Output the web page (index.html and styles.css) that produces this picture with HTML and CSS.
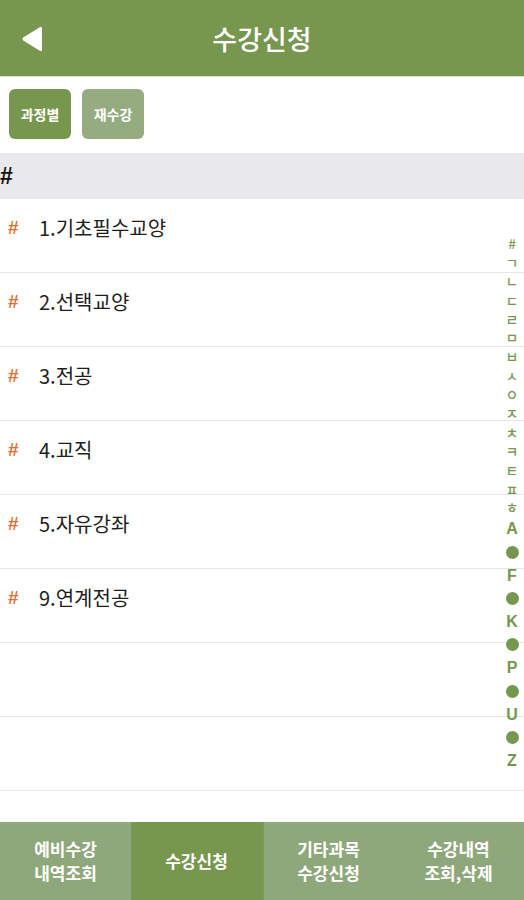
FILE: index.html
```html
<!DOCTYPE html>
<html lang="ko">
<head>
<meta charset="utf-8">
<title>수강신청</title>
<link rel="stylesheet" href="styles.css">
</head>
<body>
<div class="app">
  <header class="topbar">
    <div class="back">
      <svg width="22" height="26" viewBox="0 0 22 26"><path d="M21 2.5 L21 23.5 Q21 26 18.8 24.8 L2.2 14.6 Q0.5 13 2.2 11.4 L18.8 1.2 Q21 0 21 2.5 Z" fill="#fff"/></svg>
    </div>
    <h1 class="title">수강신청</h1>
    <div class="spacer"></div>
  </header>
  <div class="toolbar">
    <button class="chip chip-on">과정별</button>
    <button class="chip chip-off">재수강</button>
  </div>
  <div class="section">#</div>
  <ul class="list">
    <li class="row"><span class="hash">#</span><span class="label">1.기초필수교양</span></li>
    <li class="row"><span class="hash">#</span><span class="label">2.선택교양</span></li>
    <li class="row"><span class="hash">#</span><span class="label">3.전공</span></li>
    <li class="row"><span class="hash">#</span><span class="label">4.교직</span></li>
    <li class="row"><span class="hash">#</span><span class="label">5.자유강좌</span></li>
    <li class="row"><span class="hash">#</span><span class="label">9.연계전공</span></li>
    <li class="row"></li>
    <li class="row"></li>
  </ul>
  <div class="fill"></div>
  <nav class="tabs">
    <div class="tab">예비수강<br>내역조회</div>
    <div class="tab tab-on">수강신청</div>
    <div class="tab tab-mid">기타과목<br>수강신청</div>
    <div class="tab">수강내역<br>조회,삭제</div>
  </nav>
  <div class="index">
    <span class="ko">#</span><span class="ko">ㄱ</span><span class="ko">ㄴ</span><span class="ko">ㄷ</span><span class="ko">ㄹ</span><span class="ko">ㅁ</span><span class="ko">ㅂ</span><span class="ko">ㅅ</span><span class="ko">ㅇ</span><span class="ko">ㅈ</span><span class="ko">ㅊ</span><span class="ko">ㅋ</span><span class="ko">ㅌ</span><span class="ko">ㅍ</span><span class="ko">ㅎ</span>
    <span class="en">A</span><span class="dot"><i></i></span><span class="en">F</span><span class="dot"><i></i></span><span class="en">K</span><span class="dot"><i></i></span><span class="en">P</span><span class="dot"><i></i></span><span class="en">U</span><span class="dot"><i></i></span><span class="en">Z</span>
  </div>
</div>
</body>
</html>
```

FILE: styles.css
```css
* { box-sizing: border-box; }
html, body { margin: 0; padding: 0; background: #fff; }
body { font-family: "Noto Sans CJK KR", "Noto Sans", sans-serif; }
.app { position: relative; width: 524px; height: 900px; display: flex; flex-direction: column; overflow: hidden; }

.topbar { height: 77px; background: #77974f; display: grid; grid-template-columns: 70px 1fr 70px; align-items: center; border-bottom: 1px solid #d9e2cf; }
.back { padding-left: 21px; display: flex; align-items: center; padding-top: 1px; }
.title { margin: 0; text-align: center; color: #fff; font-size: 27px; font-weight: 500; letter-spacing: 0; }

.toolbar { height: 76px; display: flex; align-items: center; gap: 11px; padding: 0 9px; padding-bottom: 2px; }
.chip { width: 62px; height: 50px; border: none; border-radius: 6px; color: #fff; font-family: inherit; font-size: 14px; font-weight: 700; padding: 0; }
.chip-on { background: #77974f; }
.chip-off { background: #94ac7f; }

.section { height: 46px; background: #e9e9eb; font-family: "Liberation Sans", sans-serif; font-size: 23px; font-weight: 700; color: #111; line-height: 46px; padding-left: 0; }

.list { list-style: none; margin: 0; padding: 0; }
.row { height: 74px; border-bottom: 1.5px solid #e6e6e6; display: flex; align-items: flex-start; padding-top: 17px; }
.hash { width: 39px; padding-left: 8px; color: #e26f33; font-family: "Liberation Sans", sans-serif; font-size: 19px; font-weight: 700; line-height: 24px; }
.label { color: #1e1e1e; font-size: 20px; font-weight: 400; line-height: 24px; }

.fill { flex: 1; }

.tabs { height: 78px; display: grid; grid-template-columns: 131px 131px 131px 131px; }
.tab { background: #8fa87b; color: #fff; font-size: 17px; font-weight: 700; line-height: 24px; display: flex; align-items: center; justify-content: center; text-align: center; padding-bottom: 1px; }
.tab-on { background: #77974f; }
.tab-mid { border-left: 2px solid #7a9a55; }

.index { position: absolute; right: 0; top: 234px; width: 24px; display: flex; flex-direction: column; align-items: center; color: #76974f; }
.index .ko { height: 18.9px; line-height: 18.9px; font-size: 13.5px; font-weight: 500; }
.index .en { height: 23.2px; line-height: 23.2px; font-family: "Liberation Sans", sans-serif; font-weight: 700; font-size: 16px; }
.index .dot { height: 23.2px; display: flex; align-items: center; }
.index .dot i { display: block; width: 13px; height: 13px; border-radius: 50%; background: #76974f; }
```
